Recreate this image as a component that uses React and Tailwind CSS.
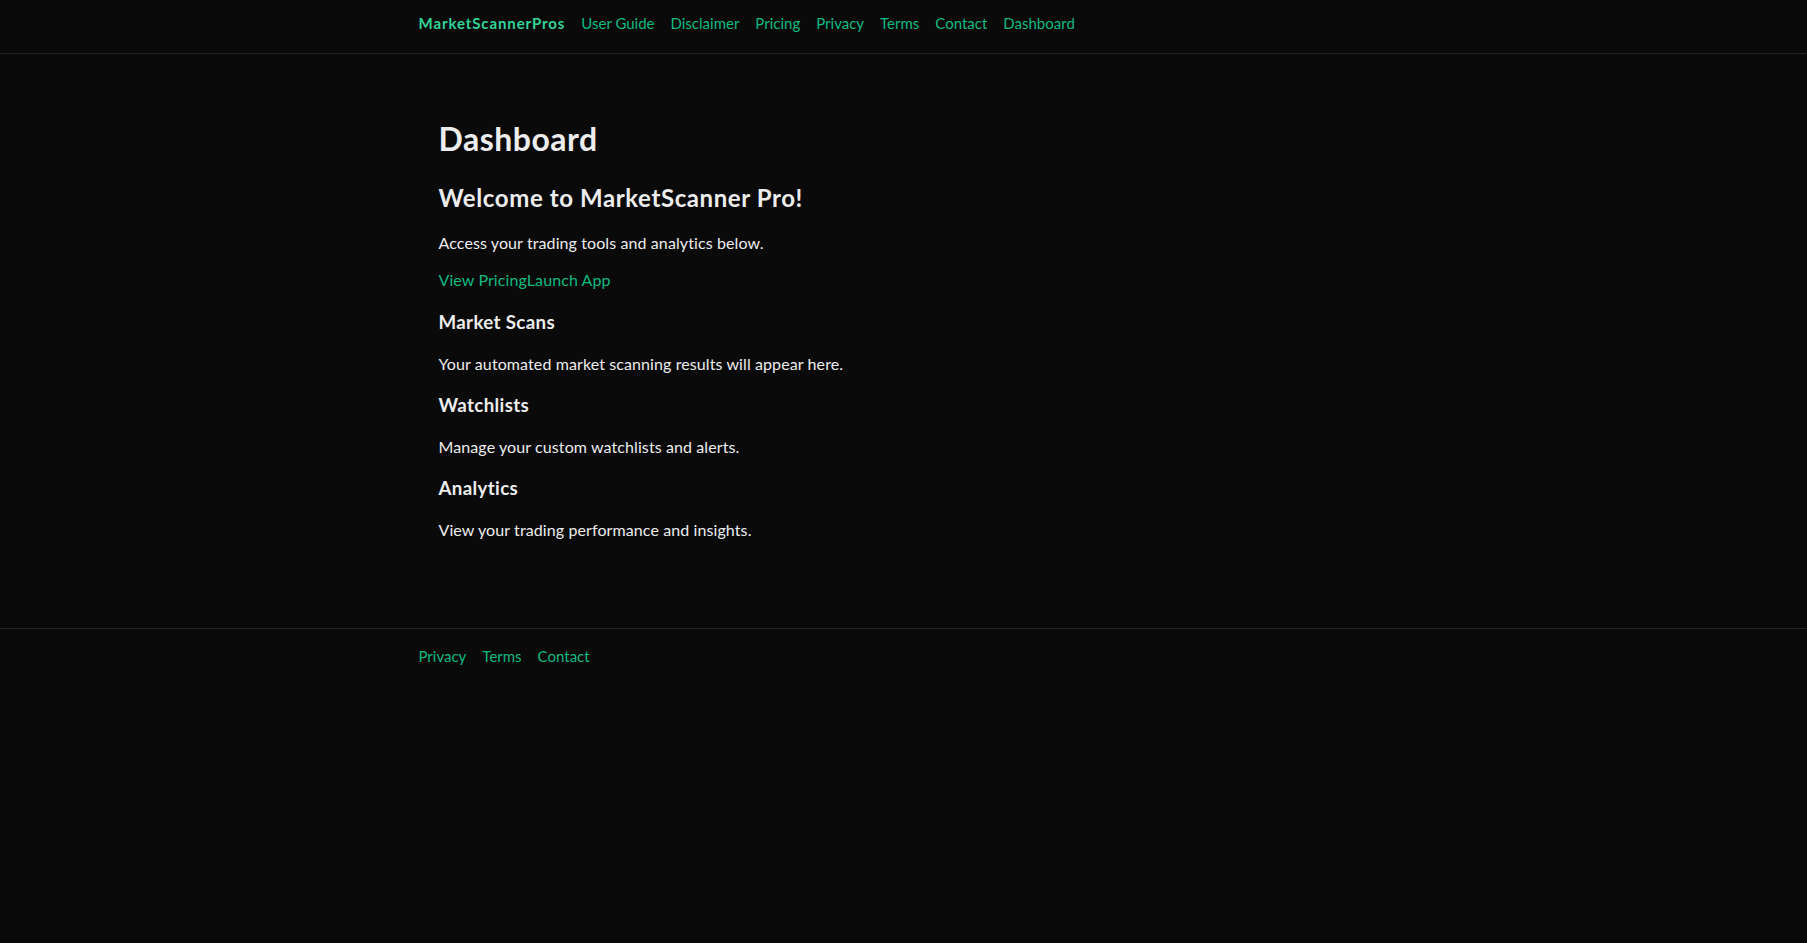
const navLinks = ['User Guide', 'Disclaimer', 'Pricing', 'Privacy', 'Terms', 'Contact', 'Dashboard'];
const footerLinks = ['Privacy', 'Terms', 'Contact'];

const sections = [
    { title: 'Market Scans', text: 'Your automated market scanning results will appear here.' },
    { title: 'Watchlists', text: 'Manage your custom watchlists and alerts.' },
    { title: 'Analytics', text: 'View your trading performance and insights.' },
];

export default function App() {
    return (
        <div className="min-h-screen bg-[#0a0a0a] text-[#ededed] font-['Lato',sans-serif]">
            {/* Header */}
            <header className="border-b border-[#222222]">
                <nav className="max-w-[1000px] mx-auto px-[15px] pt-[14px] pb-[21px] flex items-center gap-4 text-[15px] leading-[18px]">
                    <a href="#" className="font-bold text-[#34d399] tracking-[0.9px]">
                        MarketScannerPros
                    </a>
                    {navLinks.map((link) => (
                        <a key={link} href="#" className="text-[#10b981]">
                            {link}
                        </a>
                    ))}
                </nav>
            </header>

            {/* Main */}
            <main className="max-w-[960px] mx-auto px-[15px] pt-[65px] pb-[86px] tracking-[0.1px]">
                <h1 className="text-[32px] leading-[40px] font-bold mb-[23px] tracking-[0.5px]">Dashboard</h1>
                <h2 className="text-[24px] leading-[32px] font-bold mb-[17px] tracking-[0.6px]">
                    Welcome to MarketScanner Pro!
                </h2>
                <p className="text-[16px] leading-[24px] mb-[13px]">Access your trading tools and analytics below.</p>
                <div className="text-[16px] leading-[24px] mb-4 text-[#10b981]">
                    <a href="#">View Pricing</a>
                    <a href="#">Launch App</a>
                </div>

                {sections.map((section, i) => (
                    <div key={section.title}>
                        <h3 className="text-[18.72px] leading-[28px] font-bold mb-4 tracking-[0.35px]">{section.title}</h3>
                        <p className={`text-[16px] leading-[24px] ${i < sections.length - 1 ? 'mb-[15px]' : ''}`}>
                            {section.text}
                        </p>
                    </div>
                ))}
            </main>

            {/* Footer */}
            <footer className="border-t border-[#222222]">
                <div className="max-w-[1000px] mx-auto px-[15px] pt-[18px] flex gap-4 text-[15px] leading-[18px]">
                    {footerLinks.map((link) => (
                        <a key={link} href="#" className="text-[#10b981]">
                            {link}
                        </a>
                    ))}
                </div>
            </footer>
        </div>
    );
}
